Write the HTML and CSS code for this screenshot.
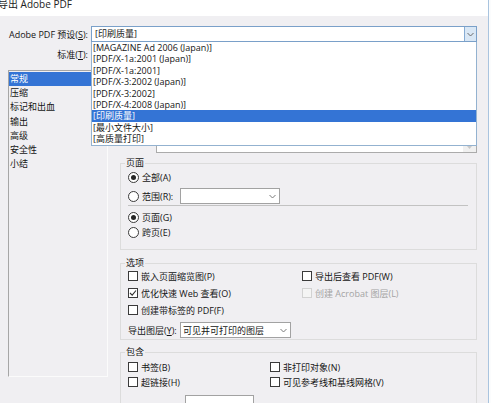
FILE: index.html
```html
<!DOCTYPE html>
<html lang="zh-CN">
<head>
<meta charset="utf-8">
<title>导出 Adobe PDF</title>
<link rel="stylesheet" href="styles.css">
</head>
<body>
<div class="window">
  <div class="titlebar"><span class="title-text">导出 Adobe PDF</span></div>
  <div class="dialog">
    <div class="form-row">
      <label class="lbl">Adobe PDF 预设(<u>S</u>):</label>
      <div class="combo combo-focused">
        <span class="combo-text">[印刷质量]</span>
        <span class="combo-btn">
          <svg width="7" height="5" viewBox="0 0 7 5"><path d="M0.5 1 L3.5 4 L6.5 1" fill="none" stroke="#6b6b6b" stroke-width="1"/></svg>
        </span>
        <ul class="dropdown">
          <li>[MAGAZINE Ad 2006 (Japan)]</li>
          <li>[PDF/X-1a:2001 (Japan)]</li>
          <li>[PDF/X-1a:2001]</li>
          <li>[PDF/X-3:2002 (Japan)]</li>
          <li>[PDF/X-3:2002]</li>
          <li>[PDF/X-4:2008 (Japan)]</li>
          <li class="selected">[印刷质量]</li>
          <li>[最小文件大小]</li>
          <li>[高质量打印]</li>
        </ul>
      </div>
    </div>
    <div class="form-row std-row">
      <label class="lbl">标准(<u>T</u>):</label>
      <div class="combo combo-std"></div>
    </div>
    <div class="main">
      <ul class="nav">
        <li class="active">常规</li>
        <li>压缩</li>
        <li>标记和出血</li>
        <li>输出</li>
        <li>高级</li>
        <li>安全性</li>
        <li>小结</li>
      </ul>
      <div class="content">
        <div class="desc-row">
          <div class="desc-spacer"></div>
          <div class="desc-box">
            <div class="desc-scroll">
              <svg width="5" height="3" viewBox="0 0 5 3"><path d="M0 0 H5 L2.5 3 Z" fill="#c8c8c8"/></svg>
            </div>
          </div>
        </div>

        <fieldset class="group group-pages">
          <legend>页面</legend>
          <div class="rows">
            <div class="opt"><span class="radio on"></span><span>全部(A)</span></div>
            <div class="opt opt-range">
              <span class="radio"></span><span>范围(R):</span>
              <div class="select select-range">
                <span></span>
                <svg width="7" height="5" viewBox="0 0 7 5"><path d="M0.5 1 L3.5 4 L6.5 1" fill="none" stroke="#7a7a7a" stroke-width="1"/></svg>
              </div>
            </div>
            <div class="sep"></div>
            <div class="opt opt-g"><span class="radio on"></span><span>页面(G)</span></div>
            <div class="opt opt-e"><span class="radio"></span><span>跨页(E)</span></div>
          </div>
        </fieldset>

        <fieldset class="group group-options">
          <legend>选项</legend>
          <div class="rows grid-options">
            <div class="opt"><span class="check"></span><span>嵌入页面缩览图(P)</span></div>
            <div class="opt"><span class="check"></span><span>导出后查看 PDF(W)</span></div>
            <div class="opt"><span class="check">
              <svg width="8" height="8" viewBox="0 0 8 8"><path d="M1 4 L3.2 6.2 L7 1.5" fill="none" stroke="#333" stroke-width="1.1"/></svg>
            </span><span>优化快速 Web 查看(O)</span></div>
            <div class="opt disabled"><span class="check"></span><span>创建 Acrobat 图层(L)</span></div>
            <div class="opt"><span class="check"></span><span>创建带标签的 PDF(F)</span></div>
            <div></div>
            <div class="layer-row">
              <label>导出图层(<u>Y</u>):</label>
              <div class="select select-layer">
                <span>可见并可打印的图层</span>
                <svg width="7" height="5" viewBox="0 0 7 5"><path d="M0.5 1 L3.5 4 L6.5 1" fill="none" stroke="#7a7a7a" stroke-width="1"/></svg>
              </div>
            </div>
          </div>
        </fieldset>

        <fieldset class="group group-include">
          <legend>包含</legend>
          <div class="rows grid-include">
            <div class="opt"><span class="check"></span><span>书签(B)</span></div>
            <div class="opt"><span class="check"></span><span>非打印对象(N)</span></div>
            <div class="opt"><span class="check"></span><span>超链接(H)</span></div>
            <div class="opt"><span class="check"></span><span>可见参考线和基线网格(V)</span></div>
            <div class="interactive-row">
              <div class="select select-inter"></div>
            </div>
          </div>
        </fieldset>
      </div>
    </div>
  </div>
</div>
</body>
</html>
```

FILE: styles.css
```css
* { box-sizing: border-box; }

html, body {
  margin: 0;
  padding: 0;
  background: #fbfcfd;
}

body {
  font-family: "Open Sans", "Noto Sans CJK SC", sans-serif;
  font-size: 9px;
  color: #151515;
}

.window {
  width: 489px;
  height: 403px;
  background: #f0eff2;
  border-right: 1px solid #a9c4df;
  overflow: hidden;
}

.titlebar {
  height: 16px;
  background: #ffffff;
  font-size: 10px;
  line-height: 9px;
  color: #222;
  white-space: nowrap;
}

.title-text { margin-left: -2px; }

.dialog {
  padding: 10px 11px 0 0;
}

.form-row {
  display: grid;
  grid-template-columns: 88px 1fr;
  column-gap: 3px;
  align-items: center;
  height: 16px;
}

.std-row { margin-top: 4px; }

.lbl {
  text-align: right;
  white-space: nowrap;
}

.combo {
  position: relative;
  height: 16px;
  background: #fff;
  border: 1px solid #adadad;
  display: flex;
  align-items: center;
}

.combo-focused { border-color: #7aa0c9; }

.combo-std { width: 150px; }

.combo-text {
  flex: 1;
  padding-left: 3px;
  line-height: 14px;
  white-space: nowrap;
}

.combo-btn {
  width: 12px;
  height: 14px;
  background: #d9e7f5;
  border-left: 1px solid #86abd3;
  display: flex;
  align-items: center;
  justify-content: center;
}

.dropdown {
  position: absolute;
  z-index: 10;
  left: -1px;
  right: -1px;
  top: calc(100% + 1px);
  margin: 0;
  padding: 0;
  list-style: none;
  background: #fff;
  border: 1px solid #93b2d0;
  border-top: 0;
}

.dropdown li {
  height: 11.4px;
  line-height: 11.4px;
  padding-left: 1px;
  white-space: nowrap;
}

.dropdown li.selected {
  background: #3474d5;
  color: #fff;
}

.main {
  display: flex;
  align-items: flex-start;
  margin-top: 8px;
  padding-left: 8px;
}

.nav {
  width: 100px;
  height: 307px;
  margin: 0;
  padding: 1px 0 0;
  list-style: none;
  border: 1px solid;
  border-color: #a6a6a6 #fbfbfb #fbfbfb #a6a6a6;
  flex: none;
}

.nav li {
  height: 14.2px;
  line-height: 14.2px;
  padding-left: 1px;
  white-space: nowrap;
}

.nav li.active {
  background: #3474d5;
  color: #fff;
}

.content {
  flex: 1;
  margin-left: 12px;
  display: flex;
  flex-direction: column;
}

.desc-row {
  display: flex;
  height: 83px;
}

.desc-spacer {
  width: 36px;
  flex: none;
}

.desc-box {
  flex: 1;
  background: #fff;
  border: 1px solid #ababab;
  display: flex;
  justify-content: flex-end;
}

.desc-scroll {
  width: 13px;
  background: #f0f0f0;
  display: flex;
  align-items: flex-end;
  justify-content: center;
  padding-bottom: 3px;
}

.group {
  margin: 0;
  min-width: 0;
  border: 1px solid #dcdcdc;
  padding: 0 8px 0 4px;
}

.group legend {
  padding: 0 1px;
  line-height: 12px;
}

.group-pages { margin-top: 4px; padding-bottom: 10px; }
.group-options { margin-top: 7px; padding-bottom: 6px; }
.group-include { margin-top: 6px; padding-bottom: 6px; }

.rows { padding-left: 3px; }

.group-pages .rows { padding-top: 2px; }
.group-options .rows { padding-top: 1px; }
.group-include .rows { padding-top: 3px; }

.opt {
  display: flex;
  align-items: center;
  gap: 3px;
  height: 13px;
  white-space: nowrap;
}

.opt-range { margin-top: 4px; height: 16px; }
.opt-g { margin-top: 5px; }
.opt-e { margin-top: 2px; }

.sep {
  height: 1px;
  margin-top: 1px;
  background: #c2c2c2;
}

.radio {
  width: 11px;
  height: 11px;
  border: 1px solid #3a3a3a;
  border-radius: 50%;
  background: #fff;
  flex: none;
  display: flex;
  align-items: center;
  justify-content: center;
}

.radio.on::after {
  content: "";
  width: 5px;
  height: 5px;
  border-radius: 50%;
  background: #262626;
}

.check {
  width: 10px;
  height: 10px;
  border: 1px solid #3a3a3a;
  background: #fff;
  flex: none;
  display: flex;
  align-items: center;
  justify-content: center;
}

.disabled { color: #a4a4a4; }
.disabled .check { border-color: #d2d2d2; background: #f4f4f4; }

.select {
  height: 16px;
  background: #fff;
  border: 1px solid #a2a2a2;
  display: flex;
  align-items: center;
  justify-content: space-between;
  padding: 0 3px 0 2px;
}

.select-range { width: 100px; margin-left: 4px; }

.grid-options {
  display: grid;
  grid-template-columns: 174px 1fr;
  grid-auto-rows: 12px;
  row-gap: 5px;
}

.grid-options .opt, .grid-include .opt { height: 12px; }

.layer-row {
  grid-column: 1 / -1;
  display: flex;
  align-items: center;
  height: 16px;
  margin-top: 1px;
  white-space: nowrap;
}

.layer-row label { width: 52px; }

.select-layer { width: 111px; }

.grid-include {
  display: grid;
  grid-template-columns: 142px 1fr;
  row-gap: 3px;
}

.interactive-row {
  grid-column: 1 / -1;
  display: flex;
  align-items: center;
  margin-top: 4px;
  padding-left: 57px;
  height: 16px;
}

.select-inter { width: 69px; }
```
